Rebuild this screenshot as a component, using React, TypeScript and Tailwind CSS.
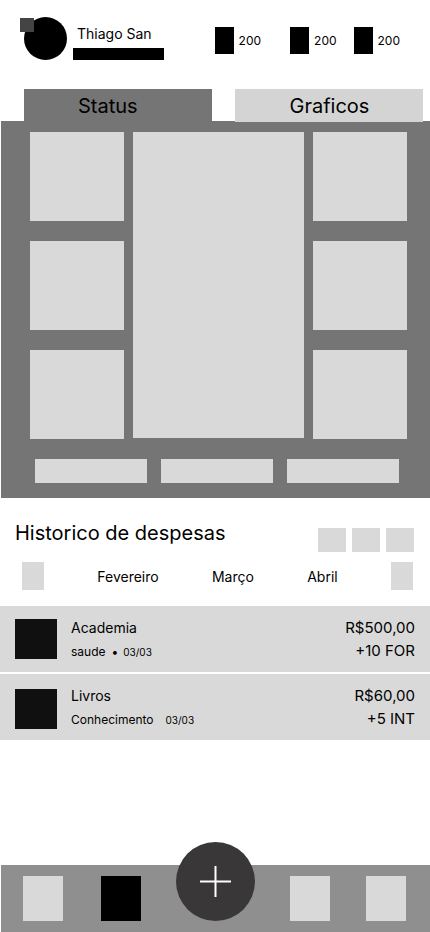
import { useState } from "react";

const counters = [
  { label: "Moedas", value: 200, spacing: "mr-[29px]" },
  { label: "Gemas", value: 200, spacing: "mr-[17px]" },
  { label: "Energia", value: 200, spacing: "" },
];

const expenses = [
  {
    title: "Academia",
    category: "saude",
    dotted: true,
    date: "03/03",
    amount: "R$500,00",
    reward: "+10 FOR",
    thumb: "mt-[3px]",
  },
  {
    title: "Livros",
    category: "Conhecimento",
    dotted: false,
    date: "03/03",
    amount: "R$60,00",
    reward: "+5 INT",
    thumb: "mt-[5px]",
  },
];

function Header() {
  return (
    <header className="flex items-end pt-[17px] pr-[30px] pl-6">
      <div className="relative size-[43px] shrink-0 rounded-full bg-black">
        <span className="absolute top-px -left-1 size-3.5 bg-[#444444]" />
      </div>
      <div className="ml-1.5 w-[91px]">
        <p className="pl-1 text-sm leading-5 whitespace-nowrap">Thiago San</p>
        <div className="mt-1 h-3 bg-black" />
      </div>
      <ul className="mb-1.5 ml-auto flex">
        {counters.map((c) => (
          <li
            key={c.label}
            aria-label={c.label}
            className={`flex items-center gap-[5px] ${c.spacing}`}
          >
            <span className="h-[27px] w-[19px] bg-black" />
            <span className="text-xs">{c.value}</span>
          </li>
        ))}
      </ul>
    </header>
  );
}

function Slots() {
  return (
    <div className="flex flex-col gap-5">
      <button aria-label="Espaço 1" className="h-[89px] bg-[#d9d9d9]" />
      <button aria-label="Espaço 2" className="h-[89px] bg-[#d9d9d9]" />
      <button aria-label="Espaço 3" className="h-[89px] bg-[#d9d9d9]" />
    </div>
  );
}

function StatusPanel() {
  return (
    <section className="mt-[29px]">
      <div role="tablist" className="flex gap-[23px] pr-[7px] pl-6 text-xl leading-8">
        <button role="tab" aria-selected="true" className="-mb-px h-[33px] flex-1 bg-[#757575] pl-[54px] text-left">
          Status
        </button>
        <button
          role="tab"
          aria-selected="false"
          className="relative -mb-px h-[33px] flex-1 bg-[#d4d4d4] pl-[55px] text-left"
        >
          Graficos
        </button>
      </div>
      <div className="ml-px bg-[#757575] pt-[11px] pr-[23px] pb-[15px] pl-[29px]">
        <div className="grid grid-cols-[94fr_171fr_94fr] gap-[9px]">
          <Slots />
          <div className="mb-px bg-[#d9d9d9]" />
          <Slots />
        </div>
        <div className="mt-5 grid grid-cols-3 gap-3.5 pr-2 pl-[5px]">
          <div className="h-6 bg-[#d9d9d9]" />
          <div className="h-6 bg-[#d9d9d9]" />
          <div className="h-6 bg-[#d9d9d9]" />
        </div>
      </div>
    </section>
  );
}

function History() {
  const [month, setMonth] = useState("Março");
  return (
    <section className="pt-[21px]">
      <div className="flex h-[33px] items-end justify-between pr-4 pl-[15px]">
        <h2 className="self-start text-xl leading-7">Historico de despesas</h2>
        <div className="flex gap-1.5">
          <button aria-label="Filtrar" className="h-6 w-7 bg-[#d9d9d9]" />
          <button aria-label="Ordenar" className="h-6 w-7 bg-[#d9d9d9]" />
          <button aria-label="Buscar" className="h-6 w-7 bg-[#d9d9d9]" />
        </div>
      </div>
      <div className="mt-2.5 flex items-end justify-between pr-[17px] pl-[22px] text-sm leading-[26px]">
        <button aria-label="Mês anterior" className="h-7 w-[22px] bg-[#d9d9d9]" />
        {["Fevereiro", "Março", "Abril"].map((m) => (
          <button key={m} aria-pressed={month === m} onClick={() => setMonth(m)}>
            {m}
          </button>
        ))}
        <button aria-label="Próximo mês" className="h-7 w-[22px] bg-[#d9d9d9]" />
      </div>
      <ul className="mt-4 flex flex-col gap-0.5">
        {expenses.map((e) => (
          <li key={e.title} className="flex items-start bg-[#d9d9d9] pt-2.5 pr-[15px] pb-2 pl-[15px]">
            <div className={`h-10 w-[42px] shrink-0 bg-[#101010] ${e.thumb}`} />
            <div className="ml-3.5">
              <p className="text-sm leading-6">{e.title}</p>
              <p className="flex items-center text-xs leading-6">
                <span>{e.category}</span>
                {e.dotted && <span className="ml-1.5 -mr-[7px]">•</span>}
                <span className="ml-3 text-[10px] leading-6">{e.date}</span>
              </p>
            </div>
            <div className="ml-auto text-right text-[15px] leading-[23px]">
              <p>{e.amount}</p>
              <p>{e.reward}</p>
            </div>
          </li>
        ))}
      </ul>
    </section>
  );
}

function BottomNav() {
  return (
    <nav className="mt-auto ml-px flex justify-between bg-[#8f8f8f] pt-[11px] pr-6 pb-[11px] pl-[22px]">
      <div className="flex gap-[38px]">
        <button aria-label="Início" className="h-[45px] w-10 bg-[#d9d9d9]" />
        <button aria-label="Perfil" className="h-[45px] w-10 bg-black" />
      </div>
      <button
        aria-label="Adicionar despesa"
        className="-mt-[34px] flex size-[79px] items-center justify-center rounded-full bg-[#393737]"
      >
        <svg width="31" height="31" viewBox="0 0 31 31" fill="none" stroke="white" strokeWidth="2">
          <path d="M0 15.5H31M15.5 0V31" />
        </svg>
      </button>
      <div className="flex gap-9">
        <button aria-label="Missões" className="h-[45px] w-10 bg-[#d9d9d9]" />
        <button aria-label="Ajustes" className="h-[45px] w-10 bg-[#d9d9d9]" />
      </div>
    </nav>
  );
}

export default function App() {
  return (
    <div className="flex min-h-screen flex-col bg-white font-['Inter',sans-serif] text-black">
      <Header />
      <StatusPanel />
      <History />
      <BottomNav />
    </div>
  );
}
